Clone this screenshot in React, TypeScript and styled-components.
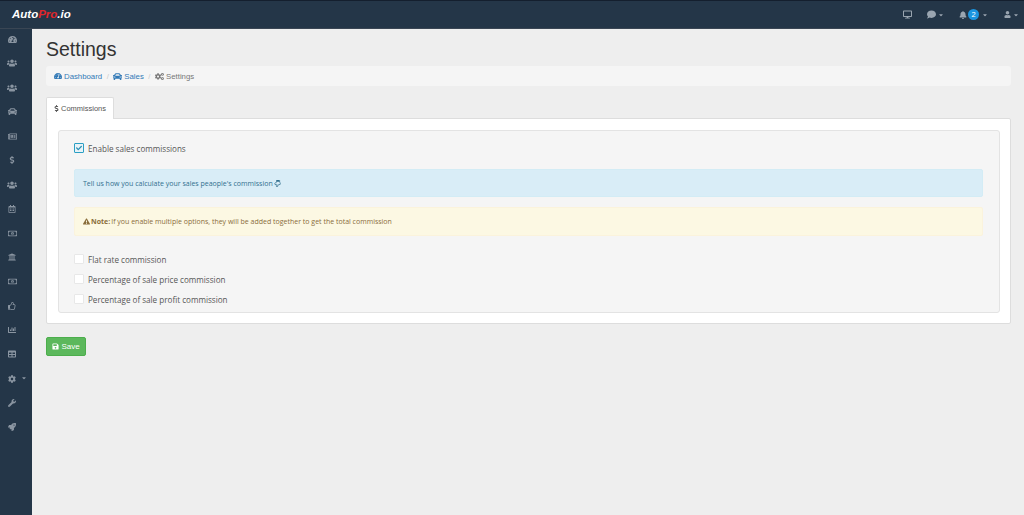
import React from "react";
import styled, { createGlobalStyle } from "styled-components";
import {
  FaTachometerAlt, FaUsers, FaCar, FaRegNewspaper, FaDollarSign, FaRegCalendarAlt, FaRegMoneyBillAlt,
  FaUniversity, FaRegThumbsUp, FaChartBar, FaTable, FaCog, FaWrench, FaRocket, FaDesktop, FaComment,
  FaBell, FaUser, FaCaretDown, FaCogs, FaCheck, FaExclamationTriangle, FaSave, FaRegHandPointDown,
} from "react-icons/fa";

const Global = createGlobalStyle`
  html, body { margin: 0; padding: 0; height: 100%; }
  body { background: #eeeeee; font-family: "Liberation Sans", Arial, sans-serif; overflow: hidden; }
`;

const Page = styled.div`display: flex; flex-direction: column; width: 1024px; height: 515px;`;
const TopBar = styled.header`
  height: 29px; flex: none; box-sizing: border-box; display: flex; align-items: center; justify-content: space-between;
  background: #243648; border-top: 1px solid #141f2e; border-bottom: 1px solid #3a4654; padding: 0 6px 0 12px;
`;
const Logo = styled.div`
  font: italic bold 11.5px "Liberation Sans", Arial, sans-serif; color: #fff; margin-top: -1px;
  span { color: #e0262b; }
`;
const TopNav = styled.nav`display: flex; align-items: center; color: #9aa5b0;`;
const TopItem = styled.div<{ $w: number }>`
  display: flex; align-items: center; width: ${p => p.$w}px; font-size: 8px; gap: 2px;
  svg { flex: none; }
`;
const Badge = styled.span`
  width: 11px; height: 11px; border-radius: 50%; background: #1b95e0; color: #fff; font-size: 7.5px; line-height: 11px;
  text-align: center; margin: 0 1px 0 -1px;
`;
const Body = styled.div`display: flex; flex: 1; min-height: 0;`;
const Side = styled.aside`
  width: 32px; flex: none; background: #243648; display: flex; flex-direction: column;
`;
const SideItem = styled.div`
  box-sizing: border-box; height: 24.25px; display: flex; align-items: flex-start; padding: 6px 0 0 8px; gap: 5px; color: #8a95a1; font-size: 8px;
  svg { flex: none; }
`;
const IconSlot = styled.span`width: 8px; height: 8px; display: flex; align-items: center; justify-content: center;`;
const Main = styled.main`flex: 1; padding: 0 13px 0 14px; min-width: 0;`;
const Title = styled.h1`
  font-weight: 400; font-size: 19.5px; line-height: 24px; color: #333; margin: 8px 0 5px 0;
`;
const Crumbs = styled.div`
  height: 20px; background: #f5f5f5; border-radius: 3px; display: flex; align-items: center; padding: 0 8px;
  font-size: 7.8px; color: #777;
`;
const CrumbLink = styled.span`
  display: inline-flex; align-items: center; gap: 2px; color: #337ab7; svg { flex: none; }
`;
const CrumbSep = styled.span`color: #ccc; margin: 0 4.5px;`;
const CrumbNow = styled.span`display: inline-flex; align-items: center; gap: 2px; color: #777;`;
const Tabs = styled.div`display: flex; margin-top: 11px;`;
const Tab = styled.div`
  box-sizing: border-box; width: 68px; height: 22px; background: #fff; border: 1px solid #ddd; border-bottom: 0;
  border-radius: 2px 2px 0 0; font-size: 7.5px; color: #555; display: flex; align-items: center; padding-left: 6px; gap: 1px;
  margin-bottom: -1px; position: relative; z-index: 1;
`;
const Panel = styled.section`
  box-sizing: border-box; height: 206px; background: #fff; border: 1px solid #ddd; border-radius: 2px; padding: 11px 10px 11px 11px;
`;
const Well = styled.div`
  box-sizing: border-box; height: 183px; background: #f5f5f5; border: 1px solid #e3e3e3; border-radius: 3px; padding: 7px 16px 0 15px;
  font-family: "Open Sans", sans-serif;
`;
const CheckRow = styled.label`
  display: flex; align-items: center; height: 20px; gap: 4px; font-size: 8.1px; color: #555;
`;
const Box = styled.span<{ $on?: boolean }>`
  box-sizing: border-box; width: 10px; height: 10px; border-radius: 1px; flex: none;
  display: flex; align-items: center; justify-content: center;
  background: ${p => (p.$on ? "#e8f3f8" : "#fff")};
  border: 1px solid ${p => (p.$on ? "#2a9fc4" : "#e8e8e8")};
  color: #2a8fb4;
`;
const Alert = styled.div<{ $kind: "info" | "warn" }>`
  box-sizing: border-box; border-radius: 2px; display: flex; align-items: center; gap: 1px; padding: 0 8px; font-size: 7px;
  background: ${p => (p.$kind === "info" ? "#d9edf7" : "#fcf8e3")};
  border: 1px solid ${p => (p.$kind === "info" ? "#d3ecf5" : "#fbf3dc")};
  color: ${p => (p.$kind === "info" ? "#31708f" : "#8a6d3b")};
  height: ${p => (p.$kind === "info" ? 28 : 29)}px;
  margin-top: ${p => (p.$kind === "info" ? 11 : 10)}px;
  b { font-weight: 700; margin: 0; }
`;
const Options = styled.div`margin-top: 13px;`;
const SaveButton = styled.button`
  margin-top: 13px; width: 40px; height: 19px; box-sizing: border-box; background: #5cb85c; border: 1px solid #4cae4c; border-radius: 2px;
  color: #fff; font: 400 8px "Liberation Sans", Arial, sans-serif; display: flex; align-items: center; justify-content: center; gap: 2px; padding: 0;
`;

const sideIcons: [React.ComponentType<{ size?: number }>, number][] = [
  [FaTachometerAlt, 9], [FaUsers, 10], [FaUsers, 10], [FaCar, 9], [FaRegNewspaper, 9], [FaDollarSign, 8], [FaUsers, 10], [FaRegCalendarAlt, 8],
  [FaRegMoneyBillAlt, 9], [FaUniversity, 8], [FaRegMoneyBillAlt, 9], [FaRegThumbsUp, 8], [FaChartBar, 8], [FaTable, 8],
];

export default function App() {
  return (
    <Page>
      <Global />
      <TopBar>
        <Logo>Auto<span>Pro</span>.io</Logo>
        <TopNav>
          <TopItem $w={24}><FaDesktop size={9} /></TopItem>
          <TopItem $w={32}><FaComment size={9} /><FaCaretDown size={6} /></TopItem>
          <TopItem $w={45}><FaBell size={8} /><Badge>2</Badge><FaCaretDown size={6} /></TopItem>
          <TopItem $w={14}><FaUser size={7} /><FaCaretDown size={6} /></TopItem>
        </TopNav>
      </TopBar>
      <Body>
        <Side>
          {sideIcons.map(([Icon, s], i) => (
            <SideItem key={i}><IconSlot><Icon size={s} /></IconSlot></SideItem>
          ))}
          <SideItem><IconSlot><FaCog size={8} /></IconSlot><FaCaretDown size={6} /></SideItem>
          <SideItem><IconSlot><FaWrench size={8} /></IconSlot></SideItem>
          <SideItem><IconSlot><FaRocket size={8} /></IconSlot></SideItem>
        </Side>
        <Main>
          <Title>Settings</Title>
          <Crumbs>
            <CrumbLink><FaTachometerAlt size={8} />Dashboard</CrumbLink>
            <CrumbSep>/</CrumbSep>
            <CrumbLink><FaCar size={9} />Sales</CrumbLink>
            <CrumbSep>/</CrumbSep>
            <CrumbNow><FaCogs size={9} />Settings</CrumbNow>
          </Crumbs>
          <Tabs><Tab><FaDollarSign size={7} />Commissions</Tab></Tabs>
          <Panel>
            <Well>
              <CheckRow><Box $on><FaCheck size={6} /></Box>Enable sales commissions</CheckRow>
              <Alert $kind="info">Tell us how you calculate your sales peaople's commission <FaRegHandPointDown size={7} /></Alert>
              <Alert $kind="warn"><FaExclamationTriangle size={7} /><b>Note:</b> If you enable multiple options, they will be added together to get the total commission</Alert>
              <Options>
                <CheckRow><Box />Flat rate commission</CheckRow>
                <CheckRow><Box />Percentage of sale price commission</CheckRow>
                <CheckRow><Box />Percentage of sale profit commission</CheckRow>
              </Options>
            </Well>
          </Panel>
          <SaveButton><FaSave size={7} />Save</SaveButton>
        </Main>
      </Body>
    </Page>
  );
}
